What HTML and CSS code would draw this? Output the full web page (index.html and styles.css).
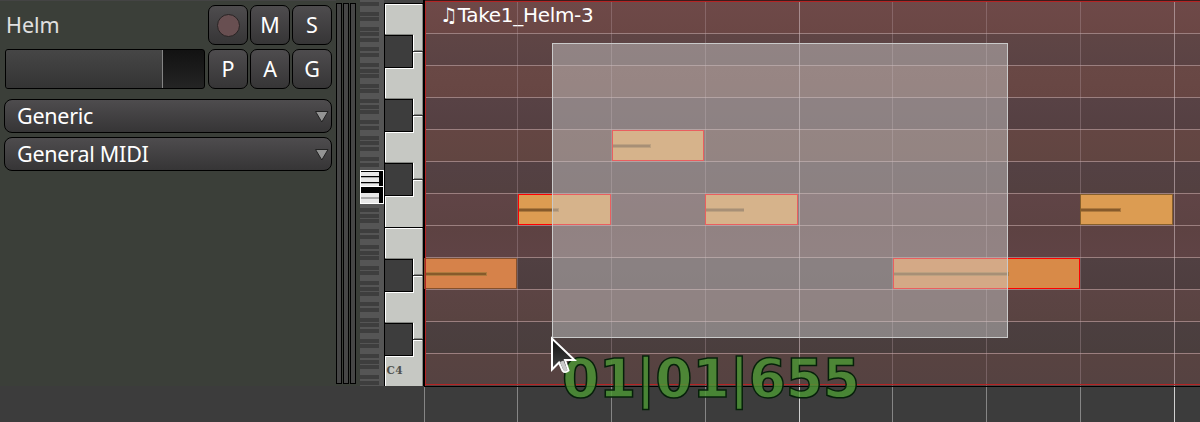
FILE: index.html
```
<!DOCTYPE html>
<html lang="en">
<head>
<meta charset="utf-8">
<title>MIDI editor</title>
<link rel="stylesheet" href="styles.css">
</head>
<body>
<div class="editor">
  <div class="track">
    <section class="controls">
      <div class="top">
        <div class="name-row"><span class="t helm">Helm</span></div>
        <div class="buttons">
          <button class="btn"><span class="rec"></span></button>
          <button class="btn">M</button>
          <button class="btn">S</button>
        </div>
        <div class="fader"><div class="level"></div></div>
        <div class="buttons">
          <button class="btn">P</button>
          <button class="btn">A</button>
          <button class="btn">G</button>
        </div>
      </div>
      <div class="combo"><span class="t generic">Generic</span><svg width="16" height="13" viewBox="0 0 16 13"><path d="M1.5 1.5h12.500L7.800 12z"/></svg></div>
      <div class="combo"><span class="t general">General MIDI</span><svg width="16" height="13" viewBox="0 0 16 13"><path d="M1.5 1.5h12.500L7.800 12z"/></svg></div>
    </section>
    <div class="meters"><i></i><i></i><i></i></div>
    <svg class="scroomer" width="24" height="386" viewBox="0 0 24 386" shape-rendering="crispEdges">
      <path d="M0 0h24v386H0z" fill="#555"/>
      <path stroke="#3e3e3e" stroke-width="4" d="M0 4h19M0 14h19M0 19h19M0 29h19M0 34h19M0 40h19M0 49h19M0 55h19M0 65h19M0 71h19M0 76h19M0 86h19M0 91h19M0 101h19M0 107h19M0 112h19M0 122h19M0 128h19M0 138h19M0 143h19M0 149h19M0 159h19M0 165h19M0 210h19M0 216h19M0 221h19M0 231h19M0 237h19M0 247h19M0 253h19M0 258h19M0 268h19M0 273h19M0 283h19M0 289h19M0 294h19M0 304h19M0 310h19M0 320h19M0 325h19M0 331h19M0 341h19M0 346h19M0 356h19M0 362h19M0 367h19M0 377h19M0 383h19"/>
      <path d="M0 170h24v34H0z" fill="#fff"/>
      <path d="M1 171h22v32H1z"/>
      <path fill="#e8e8e8" d="M1 172h18v4H1zM1 178h18v4H1zM1 184h18v2H1zM1 193h18v4H1zM1 199h18v4H1z"/>
      <path fill="#aaa" d="M1 177h18v1H1zM1 183h18v1H1zM1 197h18v2H1z"/>
      <path fill="#fff" d="M1 186h22v1H1z"/>
    </svg>
    <svg class="piano" width="41" height="386" viewBox="0 0 41 386" shape-rendering="crispEdges">
      <defs>
        <g id="key">
          <path fill="#858783" d="M1 -1h28v1H1zM29 15h10v1H29z"/>
          <path fill="#fff" d="M1 0h29v34H1zM29 17h9v1H29z"/>
          <path fill="#000" d="M1 0h28v33H1z"/>
          <path fill="#3d3d3d" d="M1 1h27v31H1z"/>
          <path fill="#333" d="M29 16h10v1H29z"/>
        </g>
      </defs>
      <path fill="#c6c8c3" d="M0 3h39v383H0z"/>
      <path fill="#444" d="M0 0h41v3H0z"/>
      <path fill="#fff" d="M1 4h37v1H1zM1 4h1v382H1zM1 228h37v1H1z"/>
      <path fill="#858783" d="M38 4h1v382h-1z"/>
      <path fill="#000" d="M0 3h1v383H0zM0 3h39v1H0zM0 227h39v1H0zM39 0h2v386h-2z"/>
      <use href="#key" y="35"/><use href="#key" y="99"/><use href="#key" y="163"/><use href="#key" y="259"/><use href="#key" y="323"/>
      <text x="2.5" y="374" class="octave" textLength="16">C4</text>
    </svg>
    <div class="region">
      <div class="lane l0"><span class="take">♫Take1_Helm-3</span></div>
      <div class="lane l1"></div><div class="lane l2"></div><div class="lane l3"></div>
      <div class="lane l4"></div><div class="lane l5"></div><div class="lane l6"></div>
      <div class="lane l7"></div><div class="lane l8"></div><div class="lane l9"></div>
      <div class="lane l10"></div><div class="lane l11"></div>
    </div>
  </div>
  <div class="below"></div>

  <svg class="canvas" width="1200" height="422" viewBox="0 0 1200 422">
    <defs>
      <linearGradient id="arrow" x1="0" y1="0" x2="0" y2="1"><stop offset="0" stop-color="#111"/><stop offset="1" stop-color="#484848"/></linearGradient>
    </defs>
    <g shape-rendering="crispEdges">
      <path class="beat" d="M517.5 2v384M611.5 2v384M705.5 2v384M892.5 2v384M986.5 2v384M1080.5 2v384"/>
      <path class="bar" d="M799.5 2v384M1174.5 2v384"/>
      <path class="beat-low" d="M424.5 387v35M517.5 387v35M611.5 387v35M705.5 387v35M892.5 387v35M986.5 387v35M1080.5 387v35"/>
      <path class="bar-low" d="M799.5 387v35M1174.5 387v35"/>
      <g class="note low"><rect x="424.500" y="258.500" width="92" height="30"/><path class="soft" d="M425 274h62"/><path class="vel" d="M425 274h61"/></g>
      <path class="edge" d="M425.5 386V1.500H1200M425 384.500H1200"/>
      <path class="outline" d="M424 386.500H1200"/>
      <g class="note sel"><rect x="518.500" y="194.500" width="92" height="30"/><path class="soft" d="M519 210h40"/><path class="vel" d="M519 210h39"/></g>
      <g class="note sel"><rect x="612.500" y="130.500" width="91" height="30"/><path class="soft" d="M613 146h38"/><path class="vel" d="M613 146h37"/></g>
      <g class="note sel"><rect x="705.500" y="194.500" width="92" height="30"/><path class="soft" d="M706 210h38"/><path class="vel" d="M706 210h38"/></g>
      <g class="note sel wide"><rect x="893.500" y="258.500" width="186" height="30"/><path class="soft" d="M894 274h115"/><path class="vel" d="M894 274h114"/></g>
      <g class="note"><rect x="1080.500" y="194.500" width="92" height="30"/><path class="soft" d="M1081 210h40"/><path class="vel" d="M1081 210h39"/></g>
      <rect class="lasso" x="552" y="43" width="456" height="295"/>
      <rect class="lasso-line" x="552.500" y="43.500" width="455" height="294"/>
    </g>
    <text class="position" x="562" y="396.500" textLength="298">01|01|655</text>
    <path class="pointer" d="M552 338.500V369.500L559 362.500L562.500 370.500Q565 373.500 568.500 370.500L565 360H574.500Z"/>
    <path class="tail" d="M560 362L563.500 370.500Q565.500 372.500 567.500 370L563.500 360.500"/>
  </svg>
</div>
</body>
</html>
```
FILE: styles.css
```
* { box-sizing: border-box; }
body { margin: 0; background: #3c3c3c; overflow: hidden; font-family: "Noto Sans", sans-serif; }
.editor { position: relative; width: 1200px; height: 422px; }
.track { display: flex; height: 386px; }
.controls { width: 336px; padding: 4px 4px 0; background: #3b3f39; border-top: 1px solid #444; }
.top { display: grid; grid-template-columns: 200px 124px; column-gap: 3px; row-gap: 4px; margin-left: 1px; }
.name-row { height: 40px; padding-left: 1px; display: flex; align-items: center; }
.t { font-size: 21.5px; line-height: 30px; white-space: nowrap; color: #fff; }
.helm { color: #e0e0e0; }
.generic, .general { letter-spacing: -.25px; }
.buttons { display: flex; gap: 2px; }
.btn { width: 40px; height: 40px; padding: 0; border: 1px solid #000; border-radius: 7px; background: linear-gradient(#4e4c4e, #363536); color: #fff; font: 21.5px/36px "Noto Sans", sans-serif; display: flex; justify-content: center; align-items: center; }
.rec { width: 23px; height: 23px; border: 1px solid #282424; border-radius: 50%; background: #684f51; }
.fader { height: 40px; border: 1px solid #000; border-radius: 3px; background: linear-gradient(#121212, #242424); overflow: hidden; }
.level { width: 157px; height: 100%; border-right: 1px solid #858585; background: linear-gradient(#464646, #343434); }
.combo { height: 34px; margin-top: 4px; border: 1px solid #000; border-radius: 8px; background: linear-gradient(#4e4c4e, #363536); display: flex; justify-content: space-between; align-items: center; padding: 0 1px 0 12px; }
.top + .combo { margin-top: 10px; }
.combo path { fill: #949494; stroke: #222; }
.meters { width: 24px; padding-top: 3px; display: flex; gap: 1px; background: #3b3f39; }
.meters i { width: 6px; height: 381px; border: 1px solid #000; background: #464646; }
.scroomer, .piano { display: block; flex: none; }
.octave { font: bold 10.5px "DejaVu Serif", serif; fill: #50524e; }
.region { flex: 1; padding-top: 2px; background: #3d1c1c; overflow: hidden; }
.lane { height: 32px; border-bottom: 1px solid #9b7f7f; }
.l0 { background: linear-gradient(#6e4948, #6b4745); padding-left: 15px; }
.l1 { background: linear-gradient(#5f4545, #5b4344); }
.l2 { background: linear-gradient(#694845, #674643); }
.l3 { background: linear-gradient(#584245, #554042); }
.l4 { background: linear-gradient(#644643, #614541); }
.l5 { background: linear-gradient(#544144, #534040); }
.l6 { background: linear-gradient(#604446, #5d4343); }
.l7 { background: linear-gradient(#5d4242, #5f4345); }
.l8 { background: linear-gradient(#514042, #4e3e3f); }
.l9 { background: linear-gradient(#5c4444, #594341); }
.l10 { background: linear-gradient(#4c3f40, #4a3e3d); }
.l11 { background: linear-gradient(#584341, #554241); border-bottom: 0; }
.take { display: block; white-space: nowrap; font: 20px/27px "DejaVu Sans", sans-serif; letter-spacing: -.3px; color: #fff; }
.below { height: 36px; background: #3c3c3c; }
.canvas { position: absolute; left: 0; top: 0; }
.beat, .bar, .beat-low, .bar-low, .edge { fill: none; }
.beat { stroke: rgba(190, 165, 170, .32); }
.bar { stroke: rgba(205, 185, 188, .6); }
.beat-low { stroke: #858585; }
.bar-low { stroke: #d0d0d0; }
.edge { stroke: #b42424; }
.outline { stroke: #000; }
.note rect { fill: #dc9c52; stroke: #865f2c; }
.note .soft { stroke: #ae7a3e; stroke-width: 4; }
.note .vel { stroke: #865a2b; stroke-width: 2; }
.low rect { fill: #d6824a; stroke: #85502c; }
.wide rect { fill: #d88a48; }
.sel rect { stroke: #f00; }
.lasso { fill: rgba(206, 206, 206, .46); }
.lasso-line { fill: none; stroke: #cacaca; }
.position { font: bold 53.5px "DejaVu Sans", sans-serif; fill: rgba(75, 151, 51, .8); stroke: #06200a; stroke-width: 1.5; }
.pointer { fill: url(#arrow); stroke: #fff; stroke-width: 2; }
.tail { fill: #c9c9c9; }
```
